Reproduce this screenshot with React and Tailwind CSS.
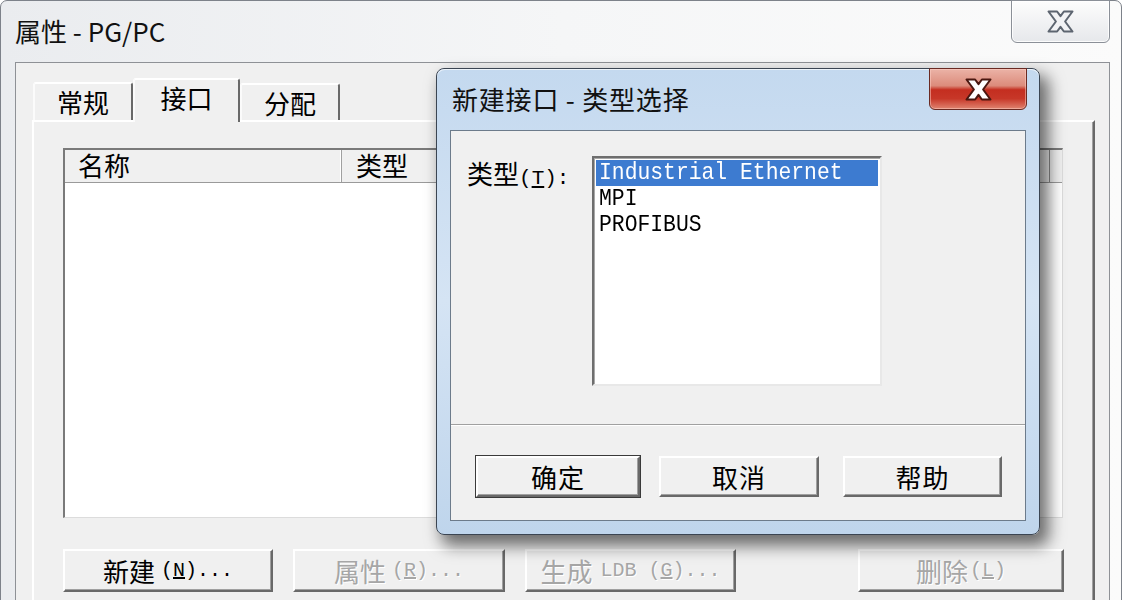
import React from "react";

function XGlyph({ stroke, fill }) {
  return (
    <svg width="27" height="23" viewBox="-1.5 -1.5 27 23">
      <polygon
        points="0,0 8.6,0 12,4.6 15.4,0 24,0 16.6,10 24,20 15.4,20 12,15.4 8.6,20 0,20 7.4,10"
        fill={fill}
        stroke={stroke}
        strokeWidth="2"
        strokeLinejoin="round"
      />
    </svg>
  );
}

function Mono({ children, className = "" }) {
  return <span className={"font-['Liberation_Mono',monospace] " + className}>{children}</span>;
}

function Btn({ children, w, h = "h-[43px]", disabled = false, isDefault = false }) {
  const face = (
    <div
      className={
        "flex h-full w-full items-center justify-center border-2 border-t-white border-l-white border-r-[#696969] border-b-[#696969] bg-[#f0f0f0] shadow-[inset_-1px_-1px_0_#a0a0a0] text-[26px] leading-[32px] " +
        (disabled ? "text-[#a6a6a6] [text-shadow:1px_1px_0_#ffffff]" : "text-black")
      }
    >
      {children}
    </div>
  );
  if (isDefault) {
    return <div className={"border border-[#3a3a3a] " + w + " " + h}>{face}</div>;
  }
  return <div className={w + " " + h}>{face}</div>;
}

function Tab({ label, w, h, selected = false }) {
  return (
    <div
      className={
        "flex items-center justify-center rounded-t-[3px] border-t-2 border-l-2 border-r-2 border-t-white border-l-[#fbfbfb] border-r-[#696969] bg-[#f0f0f0] text-[26px] leading-[32px] " +
        w +
        " " +
        h +
        " " +
        (selected ? "relative z-10 pb-[6px]" : "mb-[2px]")
      }
    >
      {label}
    </div>
  );
}

function ListItem({ text, selected = false }) {
  return (
    <div className={"h-[26px] pl-[3px] " + (selected ? "bg-[#3d7bd0] text-white" : "text-black")}>
      <span className="inline-block origin-left scale-x-[0.89] whitespace-nowrap font-['Liberation_Mono',monospace] text-[24px] leading-[26px]">
        {text}
      </span>
    </div>
  );
}

export default function App() {
  return (
    <div className="relative h-[600px] w-[1125px] overflow-hidden bg-white font-['Noto_Sans_CJK_SC',sans-serif] text-black">
      {/* main window */}
      <div className="flex h-[680px] w-[1122px] flex-col rounded-t-[7px] border border-[#7d828a] bg-linear-to-r from-[#eaecef] via-[#f5f6f7] to-[#fbfbfb]">
        {/* title bar */}
        <div className="flex h-[61px] shrink-0 items-start justify-between pl-[14px] pr-[11px]">
          <div className="pt-[14px] text-[26px] leading-[32px] text-[#111]">属性 - PG/PC</div>
          <div className="mt-[-1px] flex h-[43px] w-[99px] items-center justify-center rounded-b-[6px] border border-[#8b9098] bg-linear-to-b from-[#fdfdfd] to-[#e6e8eb] shadow-[inset_0_0_0_1px_rgba(255,255,255,0.85)]">
            <XGlyph stroke="#5d6570" fill="#f2f3f5" />
          </div>
        </div>

        {/* client */}
        <div className="ml-[14px] mr-[11px] flex flex-1 flex-col border border-[#8e9196] bg-[#f0f0f0] pl-[16px] pr-[14px] pt-[15px]">
          {/* tabs */}
          <div className="relative z-10 mb-[-2px] flex h-[44px] items-end pl-[1px]">
            <Tab label="常规" w="w-[100px]" h="h-[38px]" />
            <Tab label="接口" w="w-[107px]" h="h-[44px]" selected />
            <Tab label="分配" w="w-[100px]" h="h-[37px]" />
          </div>

          {/* tab panel */}
          <div className="flex flex-1 flex-col border-l-2 border-r-2 border-t-2 border-l-white border-r-[#696969] border-t-white bg-[#f0f0f0] px-[29px] pt-[26px] shadow-[inset_-1px_0_0_#a0a0a0]">
            {/* list view */}
            <div className="flex h-[370px] w-[1000px] flex-col border-b border-l-2 border-r border-t-2 border-b-[#dcdcdc] border-l-[#7a7a7a] border-r-[#dcdcdc] border-t-[#7a7a7a] bg-white">
              <div className="flex h-[33px] shrink-0 border-b border-b-[#9a9a9a] bg-[#f0f0f0] text-[26px] leading-[30px]">
                <div className="w-[277px] border-r border-r-[#a0a0a0] pl-[13px] shadow-[inset_-1px_0_0_#ffffff]">名称</div>
                <div className="flex-1 border-r border-r-[#8a8a8a] pl-[14px]">类型</div>
                <div className="w-[12px]"></div>
              </div>
              <div className="flex-1 bg-white"></div>
            </div>

            {/* buttons */}
            <div className="mt-[31px] flex gap-[20px]">
              <Btn w="w-[210px]">
                <span>新建</span>
                <Mono className="ml-[6px] text-[20px]">
                  (<span className="underline">N</span>)...
                </Mono>
              </Btn>
              <Btn w="w-[212px]" disabled>
                <span>属性</span>
                <Mono className="ml-[6px] text-[20px]">
                  (<span className="underline">R</span>)...
                </Mono>
              </Btn>
              <Btn w="w-[211px]" disabled>
                <span>生成</span>
                <Mono className="ml-[8px] text-[20px]">
                  LDB (<span className="underline">G</span>)...
                </Mono>
              </Btn>
              <div className="ml-auto">
                <Btn w="w-[206px]" disabled>
                  <span>删除</span>
                  <Mono className="ml-[2px] text-[20px]">
                    (<span className="underline">L</span>)
                  </Mono>
                </Btn>
              </div>
            </div>
          </div>
        </div>
      </div>

      {/* modal dialog */}
      <div className="absolute left-[436px] top-[68px] flex h-[467px] w-[604px] flex-col rounded-[8px] border border-[#3b4552] bg-linear-to-b from-[#c4d9ef] via-[#d5e4f4] to-[#bfd5ec] shadow-[7px_9px_16px_2px_rgba(0,0,0,0.55)]">
        <div className="flex h-[61px] shrink-0 items-start justify-between rounded-t-[8px] pl-[15px] pr-[12px] shadow-[inset_0_1px_0_rgba(255,255,255,0.7)]">
          <div className="pt-[14px] text-[26px] leading-[32px] tracking-[0.8px] text-[#111]">新建接口 - 类型选择</div>
          <div className="mt-[-1px] flex h-[42px] w-[98px] items-center justify-center rounded-b-[6px] border border-[#6a2a22] bg-[linear-gradient(to_bottom,#ebb3a7_0%,#dc8b7b_42%,#c42e20_52%,#c73728_74%,#e08470_100%)] shadow-[inset_0_0_0_1px_rgba(255,210,200,0.5)]">
            <XGlyph stroke="#4a1710" fill="#ffffff" />
          </div>
        </div>
        <div className="mx-[13px] mb-[13px] flex flex-1 flex-col border border-[#6c7b8b] bg-[#f0f0f0]">
          <div className="flex h-[294px] shrink-0 items-start border-b border-b-[#a0a0a0] pl-[16px] pt-[25px]">
            <div className="w-[125px] pt-[1px] text-[26px] leading-[32px]">
              类型
              <Mono className="text-[21px]">
                (<span className="underline">T</span>):
              </Mono>
            </div>
            <div className="h-[230px] w-[290px] border-2 border-b-[#e8e8e8] border-l-[#6e6e6e] border-r-[#e8e8e8] border-t-[#6e6e6e] bg-white p-[2px] shadow-[inset_1px_1px_0_#a8a8a8]">
              <ListItem text="Industrial Ethernet" selected />
              <ListItem text="MPI" />
              <ListItem text="PROFIBUS" />
            </div>
          </div>
          <div className="flex flex-1 gap-[18px] border-t border-t-white pl-[24px] pt-[29px]">
            <Btn w="w-[166px]" isDefault>
              <span className="tracking-[1px]">确定</span>
            </Btn>
            <div className="pt-[1px]">
              <Btn w="w-[160px]" h="h-[41px]">
                <span className="tracking-[1px]">取消</span>
              </Btn>
            </div>
            <div className="ml-[6px] pt-[1px]">
              <Btn w="w-[159px]" h="h-[41px]">
                <span className="tracking-[1px]">帮助</span>
              </Btn>
            </div>
          </div>
        </div>
      </div>
    </div>
  );
}
